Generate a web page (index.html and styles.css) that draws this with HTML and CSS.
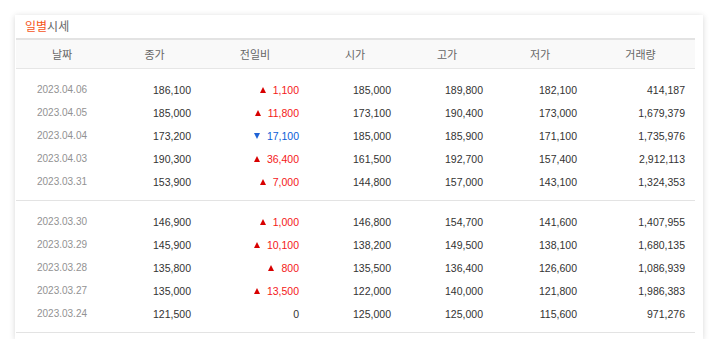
FILE: index.html
```html
<!DOCTYPE html>
<html lang="ko">

<head>
  <meta charset="UTF-8" />
  <title>일별시세</title>
  <link rel="stylesheet" href="styles.css">
</head>

<body>
  <div class="card">
    <h2 class="card-title"><em>일별</em>시세</h2>

    <div class="price-table">
      <div class="row head">
        <span>날짜</span>
        <span>종가</span>
        <span>전일비</span>
        <span>시가</span>
        <span>고가</span>
        <span>저가</span>
        <span>거래량</span>
      </div>

      <div class="group">
        <div class="row">
          <span class="date">2023.04.06</span>
          <span>186,100</span>
          <span class="up"><i class="tri"></i>1,100</span>
          <span>185,000</span>
          <span>189,800</span>
          <span>182,100</span>
          <span>414,187</span>
        </div>
        <div class="row">
          <span class="date">2023.04.05</span>
          <span>185,000</span>
          <span class="up"><i class="tri"></i>11,800</span>
          <span>173,100</span>
          <span>190,400</span>
          <span>173,000</span>
          <span>1,679,379</span>
        </div>
        <div class="row">
          <span class="date">2023.04.04</span>
          <span>173,200</span>
          <span class="down"><i class="tri"></i>17,100</span>
          <span>185,000</span>
          <span>185,900</span>
          <span>171,100</span>
          <span>1,735,976</span>
        </div>
        <div class="row">
          <span class="date">2023.04.03</span>
          <span>190,300</span>
          <span class="up"><i class="tri"></i>36,400</span>
          <span>161,500</span>
          <span>192,700</span>
          <span>157,400</span>
          <span>2,912,113</span>
        </div>
        <div class="row">
          <span class="date">2023.03.31</span>
          <span>153,900</span>
          <span class="up"><i class="tri"></i>7,000</span>
          <span>144,800</span>
          <span>157,000</span>
          <span>143,100</span>
          <span>1,324,353</span>
        </div>
      </div>

      <div class="group">
        <div class="row">
          <span class="date">2023.03.30</span>
          <span>146,900</span>
          <span class="up"><i class="tri"></i>1,000</span>
          <span>146,800</span>
          <span>154,700</span>
          <span>141,600</span>
          <span>1,407,955</span>
        </div>
        <div class="row">
          <span class="date">2023.03.29</span>
          <span>145,900</span>
          <span class="up"><i class="tri"></i>10,100</span>
          <span>138,200</span>
          <span>149,500</span>
          <span>138,100</span>
          <span>1,680,135</span>
        </div>
        <div class="row">
          <span class="date">2023.03.28</span>
          <span>135,800</span>
          <span class="up"><i class="tri"></i>800</span>
          <span>135,500</span>
          <span>136,400</span>
          <span>126,600</span>
          <span>1,086,939</span>
        </div>
        <div class="row">
          <span class="date">2023.03.27</span>
          <span>135,000</span>
          <span class="up"><i class="tri"></i>13,500</span>
          <span>122,000</span>
          <span>140,000</span>
          <span>121,800</span>
          <span>1,986,383</span>
        </div>
        <div class="row">
          <span class="date">2023.03.24</span>
          <span>121,500</span>
          <span>0</span>
          <span>125,000</span>
          <span>125,000</span>
          <span>115,600</span>
          <span>971,276</span>
        </div>
      </div>
    </div>
  </div>
</body>

</html>
```

FILE: styles.css
```css
html,
body {
  margin: 0;
  padding: 0;
  background-color: #ffffff;
  font-family: 'Liberation Sans', 'Noto Sans CJK KR', sans-serif;
}

.card {
  width: 679px;
  margin: 15px 0 0 15px;
  padding: 0 8px 6px 1px;
  background: #fff;
  box-shadow: 0 1px 6px rgba(0, 0, 0, 0.16);
}

.card-title {
  margin: 0;
  padding: 0 0 0 9px;
  height: 23px;
  line-height: 21px;
  font-size: 12px;
  font-weight: normal;
  color: #666;
  font-family: 'Noto Sans CJK KR', sans-serif;
}

.card-title em {
  font-style: normal;
  color: #f5561c;
}

.price-table {
  width: 679px;
}

.row {
  display: grid;
  grid-template-columns: 92px 93px 108px 92px 92px 94px 107px;
  height: 23px;
  align-items: center;
  font-size: 10.5px;
  color: #333;
}

.row span {
  text-align: right;
  padding-right: 10px;
  white-space: nowrap;
}

.row span:last-child {
  padding-right: 9px;
}

.row.head {
  height: 28px;
  border-top: 2px solid #e3e3e3;
  border-bottom: 1px solid #e6e6e6;
  background: #f9f9f9;
  font-family: 'Noto Sans CJK KR', sans-serif;
  font-size: 11px;
  color: #666;
}

.row.head span,
.row .date {
  text-align: center;
  padding-right: 0;
}

.row .date {
  font-size: 10px;
  color: #929292;
}

.group {
  padding: 9px 0 7px;
  border-bottom: 1px solid #e3e3e3;
}

.up {
  color: #f41818;
}

.down {
  color: #0b5ed7;
}

.tri {
  display: inline-block;
  width: 0;
  height: 0;
  margin-right: 7px;
  vertical-align: 1px;
  border-left: 3.5px solid transparent;
  border-right: 3.5px solid transparent;
}

.up .tri {
  border-bottom: 6px solid #d80000;
}

.down .tri {
  border-top: 6px solid #1f63d6;
}
```
